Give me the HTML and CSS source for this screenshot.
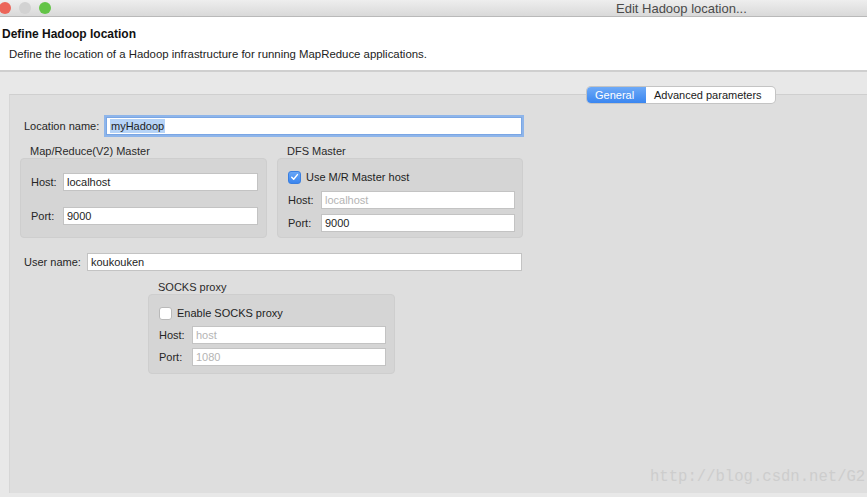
FILE: index.html
```html
<!DOCTYPE html>
<html>
<head>
<meta charset="utf-8">
<link rel="stylesheet" href="styles.css">
</head>
<body>
<div class="window">
  <div class="titlebar">
    <div class="lights">
      <span class="light red"></span>
      <span class="light gray"></span>
      <span class="light green"></span>
    </div>
    <div class="wtitle">Edit Hadoop location...</div>
  </div>
  <div class="header">
    <div class="h-title">Define Hadoop location</div>
    <div class="h-sub">Define the location of a Hadoop infrastructure for running MapReduce applications.</div>
  </div>
  <div class="content">
    <div class="panel">
      <div class="tabs">
        <span class="tab active">General</span>
        <span class="tab">Advanced parameters</span>
      </div>
      <div class="form">
        <div class="row loc">
          <span class="lbl">Location name:</span>
          <span class="input focus w416"><span class="sel">myHadoop</span></span>
        </div>
        <div class="groups">
          <div class="group-wrap">
            <div class="gtitle">Map/Reduce(V2) Master</div>
            <div class="group mr">
              <div class="grow"><span class="lbl">Host:</span><span class="input w195">localhost</span></div>
              <div class="grow"><span class="lbl">Port:</span><span class="input w195">9000</span></div>
            </div>
          </div>
          <div class="group-wrap">
            <div class="gtitle">DFS Master</div>
            <div class="group dfs">
              <div class="check"><span class="cb on"><svg width="12" height="12" viewBox="0 0 12 12"><path d="M3 6.2 L5.1 8.4 L9.2 3.4" fill="none" stroke="#fff" stroke-width="1.6" stroke-linecap="round" stroke-linejoin="round"/></svg></span><span>Use M/R Master host</span></div>
              <div class="grow"><span class="lbl">Host:</span><span class="input w194 dis">localhost</span></div>
              <div class="grow"><span class="lbl">Port:</span><span class="input w194">9000</span></div>
            </div>
          </div>
        </div>
        <div class="row user">
          <span class="lbl">User name:</span>
          <span class="input w435">koukouken</span>
        </div>
        <div class="socks-wrap">
          <div class="gtitle">SOCKS proxy</div>
          <div class="group socks">
            <div class="check"><span class="cb"></span><span>Enable SOCKS proxy</span></div>
            <div class="grow"><span class="lbl">Host:</span><span class="input w194 dis">host</span></div>
            <div class="grow"><span class="lbl">Port:</span><span class="input w194 dis">1080</span></div>
          </div>
        </div>
      </div>
      <div class="watermark">http://blog.csdn.net/G2</div>
    </div>
  </div>
</div>
</body>
</html>
```

FILE: styles.css
```css
html, body {
  margin: 0;
  padding: 0;
  background: #f2f2f2;
}
body {
  width: 867px;
  height: 497px;
  overflow: hidden;
  font-family: "Liberation Sans", Arial, sans-serif;
  font-size: 11px;
  color: #262626;
}
.window {
  width: 867px;
  height: 497px;
  display: flex;
  flex-direction: column;
}
.titlebar {
  height: 16px;
  flex: none;
  background: linear-gradient(#eeeeee, #d9d9d9);
  border-bottom: 1px solid #b9b9b9;
  display: flex;
  align-items: center;
}
.lights {
  display: flex;
  gap: 8px;
  margin-left: -1px;
}
.light {
  width: 12px;
  height: 12px;
  border-radius: 50%;
  display: block;
}
.light.red { background: #ec6559; }
.light.gray { background: #d2d2d2; }
.light.green { background: #63c447; }
.wtitle {
  margin-left: 565px;
  font-size: 13px;
  color: #4a4a4a;
}
.header {
  height: 53px;
  flex: none;
  background: #ffffff;
  border-bottom: 2px solid #cfcfcf;
}
.h-title {
  font-weight: bold;
  font-size: 12px;
  color: #111;
  margin: 10px 0 0 2px;
  line-height: 14px;
}
.h-sub {
  margin: 7px 0 0 9px;
  font-size: 11.4px;
  line-height: 13px;
  color: #222;
}
.content {
  flex: 1;
  background: #e8e8e8;
  padding: 22px 0 0 9px;
  display: flex;
  flex-direction: column;
}
.panel {
  position: relative;
  background: #dedede;
  border-top: 1px solid #cfcfcf;
  border-left: 1px solid #d6d6d6;
  height: 398px;
  flex: none;
}
.tabs {
  position: absolute;
  left: 577px;
  top: -8px;
  display: flex;
  height: 16px;
  border-radius: 4px;
  box-shadow: 0 0 0 1px #c4c4c4;
  overflow: hidden;
  background: #fff;
}
.tab {
  display: flex;
  align-items: center;
  padding: 0 8px;
  font-size: 11px;
  color: #1a1a1a;
}
.tab.active {
  background: linear-gradient(#6eaaf7, #3a86f0);
  color: #ffffff;
  width: 43px;
}
.tab:last-child {
  width: 113px;
}
.form {
  padding: 22px 0 0 10px;
  width: 503px;
}
.row {
  display: flex;
  justify-content: space-between;
  align-items: center;
  padding-left: 4px;
  height: 18px;
  width: 498px;
}
.input {
  display: flex;
  align-items: center;
  box-sizing: border-box;
  height: 18px;
  background: #ffffff;
  border: 1px solid #c3c3c3;
  padding-left: 3px;
  font-size: 11px;
  color: #1e1e1e;
}
.input.dis { color: #b4b4b4; }
.input.focus {
  box-shadow: 0 0 0 2px #8eb5ea;
  border-color: #7aa6e4;
}
.sel {
  background: #b6d3f6;
  padding: 1px 1px;
}
.w416 { width: 416px; }
.w435 { width: 435px; }
.w195 { width: 195px; }
.w194 { width: 194px; }
.groups {
  display: flex;
  gap: 10px;
  margin-top: 9px;
}
.group-wrap {
  display: flex;
  flex-direction: column;
}
.gtitle {
  height: 14px;
  line-height: 14px;
  padding-left: 10px;
  color: #2a2a2a;
}
.group {
  box-sizing: border-box;
  background: #d5d5d5;
  border: 1px solid #cecece;
  border-radius: 4px;
  height: 80px;
  display: flex;
  flex-direction: column;
}
.group.mr {
  width: 247px;
  padding: 14px 8px 0 10px;
  gap: 16px;
}
.group.dfs {
  width: 246px;
  padding: 12px 7px 0 10px;
  gap: 5px;
}
.grow {
  display: flex;
  justify-content: space-between;
  align-items: center;
  height: 18px;
}
.check {
  display: flex;
  align-items: center;
  gap: 5px;
  height: 12px;
  margin-bottom: 3px;
  color: #1e1e1e;
  font-size: 11px;
}
.cb {
  width: 11px;
  height: 11px;
  border-radius: 3px;
  background: #fff;
  border: 1px solid #b9b9b9;
  display: flex;
  align-items: center;
  justify-content: center;
}
.cb.on {
  background: linear-gradient(#68a6f6, #3a85ee);
  border-color: #3a7fe0;
}
.cb svg { display: block; }
.user {
  margin-top: 15px;
}
.socks-wrap {
  margin-left: 128px;
  margin-top: 9px;
  display: flex;
  flex-direction: column;
}
.group.socks {
  width: 247px;
  padding: 12px 8px 0 10px;
  gap: 4px;
}
.watermark {
  position: absolute;
  left: 640px;
  top: 373px;
  font-family: "Liberation Mono", "DejaVu Sans Mono", monospace;
  font-size: 15.6px;
  color: #cdcdcd;
  white-space: nowrap;
}
```
